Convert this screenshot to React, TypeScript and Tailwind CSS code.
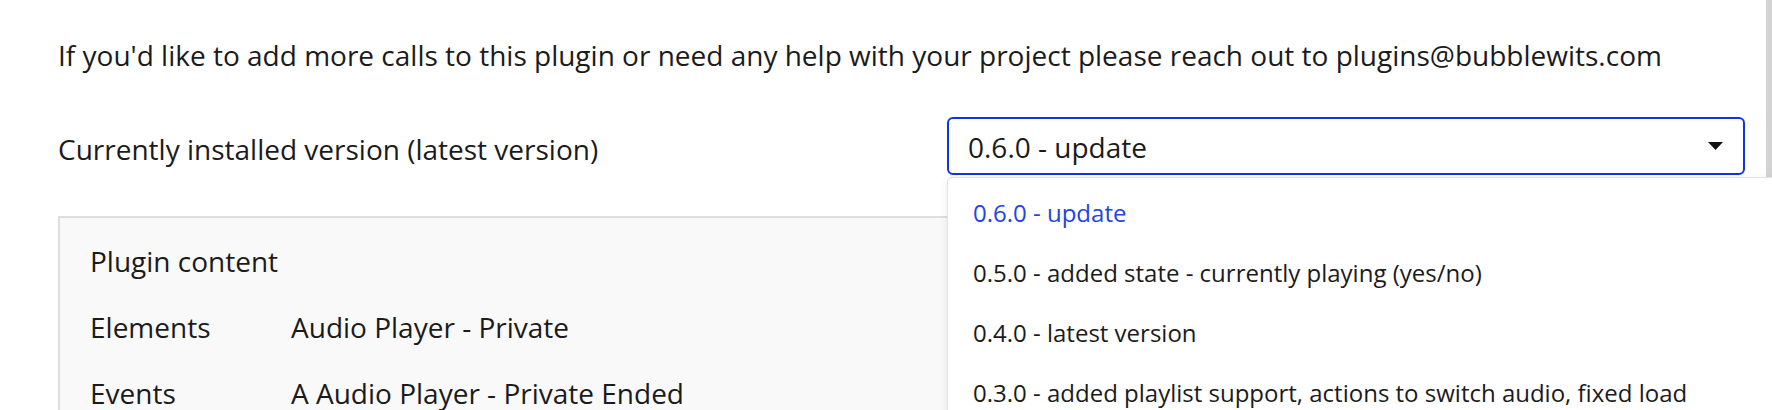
const versions = [
  { id: "0.6.0", label: "0.6.0 - update", selected: true },
  { id: "0.5.0", label: "0.5.0 - added state - currently playing (yes/no)" },
  { id: "0.4.0", label: "0.4.0 - latest version" },
  {
    id: "0.3.0",
    label: "0.3.0 - added playlist support, actions to switch audio, fixed load audio action",
  },
];

const content = [
  { kind: "Elements", value: "Audio Player - Private" },
  { kind: "Events", value: "A Audio Player - Private Ended" },
];

export default function App() {
  return (
    <div className="relative flex h-[410px] w-[1772px] overflow-hidden bg-white font-['Open_Sans',sans-serif] text-[28px] leading-[40px] text-[#1b1b1b]">
      <div className="flex-1 pl-[58px] pt-[35px]">
        <p>
          If you'd like to add more calls to this plugin or need any help with your project please reach out to
          plugins@bubblewits.com
        </p>

        <div className="mt-[42px] flex">
          <p className="w-[889px] pt-[12px]">Currently installed version (latest version)</p>
          <div className="flex h-[58px] w-[798px] items-center justify-between rounded-[6px] border-2 border-[#1233e0] pl-[19px] pr-[20px] pt-[2px]">
            <span>0.6.0 - update</span>
            <svg width="15" height="8" viewBox="0 0 15 8" className="mb-[2px]">
              <path d="M0 0 L15 0 L7.5 8 Z" fill="#111" />
            </svg>
          </div>
        </div>

        <div className="mt-[41px] w-[1650px] border-2 border-[#dedede] bg-[#f9f9f9] pb-[40px] pl-[30px] pt-[23px]">
          <p>Plugin content</p>
          <div className="mt-[26px] flex flex-col gap-[26px]">
            {content.map((row) => (
              <div key={row.kind} className="flex">
                <span className="w-[201px]">{row.kind}</span>
                <span>{row.value}</span>
              </div>
            ))}
          </div>
        </div>
      </div>

      <div className="w-[6px] shrink-0 bg-[#d3d3d3]" />

      {/* open dropdown of the version select */}
      <div className="absolute left-[947px] top-[177px] w-[840px] rounded-tl-[5px] border border-[#e4e4e4] bg-white pt-[5px] text-[24px] leading-[32px] shadow-[0_2px_8px_rgba(0,0,0,0.08)]">
        {versions.map((v) => (
          <div
            key={v.id}
            className={`py-[14px] pl-[25px] pr-[66px] ${v.selected ? "text-[#2443e6]" : "text-[#1b1b1b]"}`}
          >
            {v.label}
          </div>
        ))}
      </div>
    </div>
  );
}
